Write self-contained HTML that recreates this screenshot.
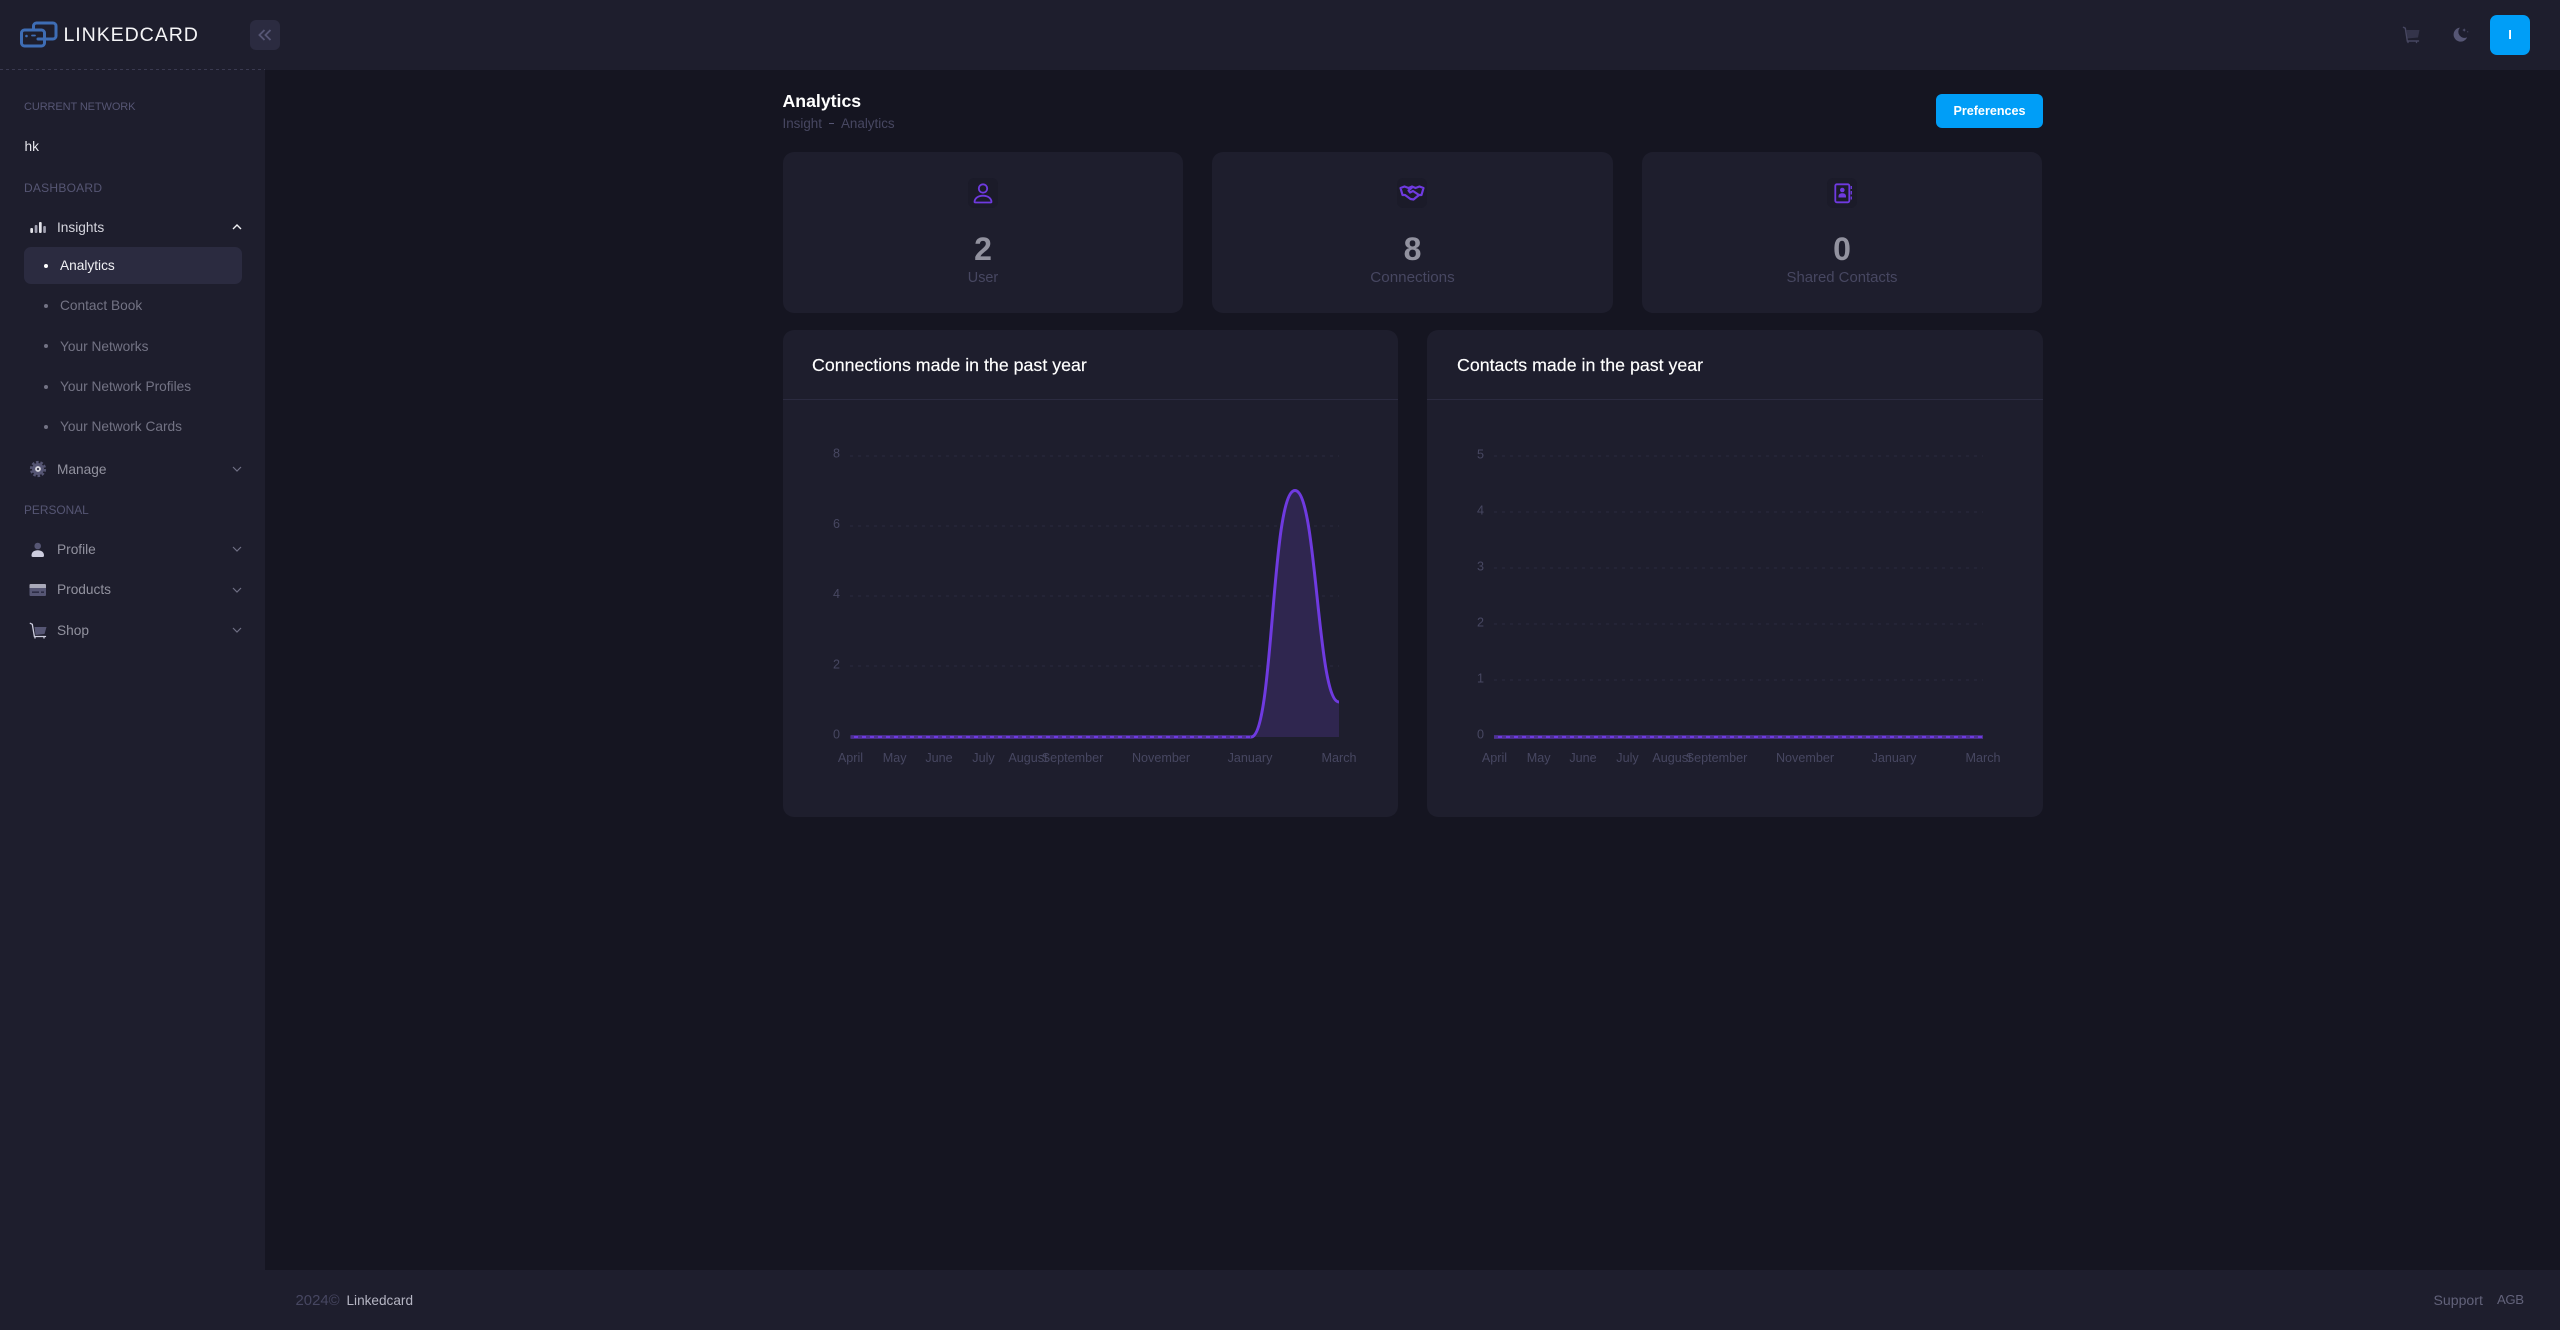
<!DOCTYPE html>
<html lang="en">
<head>
<meta charset="utf-8">
<title>Analytics - Linkedcard</title>
<style>
html,body{margin:0;padding:0;width:2560px;height:1330px;overflow:hidden;background:#151521;font-family:"Liberation Sans",Arial,sans-serif}
*{box-sizing:border-box}
.a,.t{position:absolute}
.t{white-space:nowrap;line-height:20px;height:20px}
svg{position:absolute;overflow:visible}
.panel{position:absolute;background:#1e1e2d;border-radius:11px}
.sec{color:#565674;left:24px}
.nav{left:57px;font-size:13.7px;color:#92929f}
.sub{left:60px;font-size:13.7px;color:#737384}
.dot{position:absolute;left:43.5px;width:4px;height:4px;border-radius:50%;background:#737384}
.box{position:absolute;top:178px;width:30px;height:30px;border-radius:6px;background:#1b1b29}
.num{font-weight:700;font-size:32px;color:#92929f;text-align:center;line-height:36px;height:36px;top:231px}
.lbl{color:#474761;text-align:center;top:268px}
.ct{top:355px;font-size:17.8px;color:#fff;-webkit-text-stroke:.15px #fff}
.hr{position:absolute;top:399px;height:1px;background:#2b2b40}
.ax{font-size:12.6px;fill:#474761;font-family:"Liberation Sans",Arial,sans-serif}
.grid{stroke:#2b2b3e;stroke-width:1;stroke-dasharray:3 5;fill:none}
.base{stroke:#2b2b40;stroke-width:1;stroke-dasharray:4 4;fill:none}
</style>
</head>
<body>
<!-- header + sidebar + footer surfaces -->
<div class="a" style="left:0;top:0;width:2560px;height:70px;background:#1e1e2d"></div>
<div class="a" style="left:0;top:70px;width:265px;height:1260px;background:#1e1e2d"></div>
<div class="a" style="left:265px;top:1270px;width:2295px;height:60px;background:#1e1e2d"></div>
<div class="a" style="left:0;top:69px;width:265px;height:1px;background-image:linear-gradient(90deg,#3a3a50 50%,transparent 50%);background-size:6px 1px"></div>

<!-- logo -->
<svg style="left:0;top:0" width="70" height="70" viewBox="0 0 70 70" fill="none" stroke="#3e6db5" stroke-width="3" stroke-linecap="round" stroke-linejoin="round">
<path d="M33.5 29V26a3 3 0 0 1 3-3H53a3 3 0 0 1 3 3V36a3 3 0 0 1-3 3H38"/>
<rect x="21.5" y="30" width="23" height="16" rx="3"/>
<circle cx="26.5" cy="36" r=".8" fill="#3e6db5" stroke-width="1"/>
<path d="M32 35.5H35" stroke-width="1.800"/>
</svg>
<div class="t" style="left:63.5px;top:24.5px;font-size:19.6px;letter-spacing:.9px;color:#f4f4f6">LINKEDCARD</div>

<!-- collapse -->
<div class="a" style="left:250px;top:20px;width:30px;height:30px;border-radius:6px;background:#2b2b40"></div>
<svg style="left:250px;top:20px" width="30" height="30" viewBox="0 0 30 30" fill="none" stroke="#565674" stroke-width="1.900"><path d="M14.500 10 9.500 15l5 5M20.500 10l-5 5 5 5"/></svg>

<!-- top right -->
<svg style="left:2400px;top:24px" width="24" height="22" viewBox="0 0 24 22" fill="none">
<path d="M6.500 6H19.500L18 13.500 7.500 14.500Z" fill="#34344a"/>
<path d="M3.500 3.300 5.300 4.200 7.300 17H18.500M8 17v1.500M16.500 17v1.500" stroke="#474761" stroke-width="1.400" stroke-linecap="round"/>
</svg>
<svg style="left:2451px;top:26px" width="20" height="18" viewBox="0 0 22 20" fill="#565674">
<path d="M9.800 1.800A7.800 7.800 0 1 0 17.800 12.500 6.800 6.800 0 0 1 9.800 1.800Z"/>
<path d="M14.500 2.500l.6 1.400 1.400.6-1.400.6-.6 1.400-.6-1.400-1.400-.6 1.400-.6Z"/>
<circle cx="18.500" cy="6.500" r=".6"/>
</svg>
<div class="a" style="left:2490px;top:15px;width:40px;height:40px;border-radius:7px;background:#009ef7;color:#fff;font-weight:700;font-size:13px;line-height:40px;text-align:center">I</div>

<!-- sidebar -->
<div class="t sec" style="top:97px;font-size:11px;letter-spacing:-.1px">CURRENT NETWORK</div>
<div class="t" style="left:24.500px;top:137px;font-size:13.7px;color:#e6e6ec">hk</div>
<div class="t sec" style="top:177.500px;font-size:12px;letter-spacing:.25px">DASHBOARD</div>

<svg style="left:28px;top:219px" width="20" height="16" viewBox="0 0 20 16" fill="#e4e4ea">
<rect x="2.300" y="9" width="2.700" height="5" rx="1"/><rect x="6.700" y="6" width="2.700" height="8" rx="1" fill="#a0a0b0"/><rect x="11" y="3" width="2.700" height="11" rx="1"/><rect x="15.200" y="7" width="2.700" height="7" rx="1" fill="#a0a0b0"/>
</svg>
<div class="t nav" style="top:217.500px;color:#d5d5de">Insights</div>
<svg style="left:231px;top:221px" width="12" height="12" viewBox="0 0 12 12" fill="none" stroke="#f0f0f4" stroke-width="1.400"><path d="M2 8 6 4l4 4"/></svg>

<div class="a" style="left:24px;top:247px;width:218px;height:37px;border-radius:7px;background:#2b2b40"></div>
<div class="dot" style="top:263.500px;background:#fff"></div>
<div class="t sub" style="top:255.500px;color:#f0f0f4">Analytics</div>
<div class="dot" style="top:303.500px"></div>
<div class="t sub" style="top:295.500px">Contact Book</div>
<div class="dot" style="top:344px"></div>
<div class="t sub" style="top:336.500px">Your Networks</div>
<div class="dot" style="top:384.500px"></div>
<div class="t sub" style="top:376.500px">Your Network Profiles</div>
<div class="dot" style="top:424.500px"></div>
<div class="t sub" style="top:416.500px">Your Network Cards</div>

<svg style="left:28px;top:459px" width="20" height="20" viewBox="0 0 20 20">
<circle cx="10" cy="10" r="6" fill="#565674"/>
<circle cx="10" cy="10" r="7" fill="none" stroke="#565674" stroke-width="2.200" stroke-dasharray="2.600 1.800"/>
<circle cx="10" cy="10" r="2.900" fill="#d5d5de"/><circle cx="10" cy="10" r="1.100" fill="#3a3a50"/>
</svg>
<div class="t nav" style="top:459.500px">Manage</div>
<svg style="left:231px;top:463px" width="12" height="12" viewBox="0 0 12 12" fill="none" stroke="#6f6f84" stroke-width="1.200"><path d="M2 4l4 4 4-4"/></svg>

<div class="t sec" style="top:499.500px;font-size:11.9px">PERSONAL</div>

<svg style="left:28px;top:540px" width="20" height="20" viewBox="0 0 20 20">
<circle cx="9.700" cy="6" r="3.300" fill="#565674"/>
<path d="M3.500 15.500C3.500 12 6.300 10.300 9.700 10.300S16 12 16 15.500C16 16.600 15.500 17 14.500 17H5C4 17 3.500 16.600 3.500 15.500Z" fill="#cdcdde"/>
</svg>
<div class="t nav" style="top:539.500px">Profile</div>
<svg style="left:231px;top:543px" width="12" height="12" viewBox="0 0 12 12" fill="none" stroke="#6f6f84" stroke-width="1.200"><path d="M2 4l4 4 4-4"/></svg>

<svg style="left:28px;top:580px" width="20" height="20" viewBox="0 0 20 20">
<path d="M1.500 5a1 1 0 0 1 1-1H17a1 1 0 0 1 1 1V8H1.500Z" fill="#a9a9b9"/>
<path d="M1.500 8H18V15a1 1 0 0 1-1 1H2.500a1 1 0 0 1-1-1Z" fill="#565674"/>
<rect x="4" y="11.500" width="7" height="1.300" fill="#23233a"/><rect x="13" y="11.500" width="3" height="1.300" fill="#23233a"/>
</svg>
<div class="t nav" style="top:580px">Products</div>
<svg style="left:231px;top:584px" width="12" height="12" viewBox="0 0 12 12" fill="none" stroke="#6f6f84" stroke-width="1.200"><path d="M2 4l4 4 4-4"/></svg>

<svg style="left:28px;top:621px" width="20" height="20" viewBox="0 0 20 20" fill="none">
<path d="M6.500 6H18.500L16.500 13 7.500 14Z" fill="#565674"/>
<path d="M2.300 2.300 4.300 3.300 6.400 15.500H17.500M7 15.500v1.500M16 15.500v1.500" stroke="#cdcdde" stroke-width="1.300" stroke-linecap="round"/>
</svg>
<div class="t nav" style="top:620.500px">Shop</div>
<svg style="left:231px;top:624px" width="12" height="12" viewBox="0 0 12 12" fill="none" stroke="#6f6f84" stroke-width="1.200"><path d="M2 4l4 4 4-4"/></svg>

<!-- page heading -->
<div class="t" style="left:782.500px;top:91px;font-size:17.7px;font-weight:700;color:#fff">Analytics</div>
<div class="t" style="left:782.500px;top:114px;font-size:13.4px;color:#474761">Insight</div>
<div class="a" style="left:828.500px;top:122.500px;width:5px;height:1.500px;background:#565674"></div>
<div class="t" style="left:841px;top:114px;font-size:13.4px;color:#474761">Analytics</div>
<div class="a" style="left:1936px;top:94px;width:107px;height:34px;border-radius:6px;background:#009ef7;color:#fff;font-weight:700;font-size:12.600px;line-height:34px;text-align:center">Preferences</div>

<!-- stat cards -->
<div class="panel" style="left:783px;top:152px;width:400px;height:161px"></div>
<div class="panel" style="left:1212px;top:152px;width:401px;height:161px"></div>
<div class="panel" style="left:1642px;top:152px;width:400px;height:161px"></div>

<div class="box" style="left:968px"></div>
<svg style="left:968px;top:178px" width="30" height="30" viewBox="0 0 30 30" fill="none" stroke="#6f3ae0" stroke-width="1.800">
<circle cx="15" cy="10.500" r="4.200"/>
<path d="M7.300 24.500H22.700C23.300 24.500 23.600 24.200 23.500 23.600 23 20 19.500 17.700 15 17.700S7 20 6.500 23.600C6.400 24.200 6.700 24.500 7.300 24.500Z"/>
</svg>
<div class="t num" style="left:783px;width:400px">2</div>
<div class="t lbl" style="left:783px;width:400px;font-size:14.4px">User</div>

<div class="box" style="left:1397px"></div>
<svg style="left:1397px;top:178px" width="30" height="30" viewBox="0 0 30 30" fill="none" stroke="#6f3ae0" stroke-width="2.200" stroke-linejoin="round" stroke-linecap="round">
<path d="M3.500 10 7.500 8.500 11.500 10 15 8.500 18.500 10 22.500 8.500 26.500 10 24.500 17 22 17 16.500 21.500 13.500 21 8 17 5.500 17Z"/>
<path d="M15 9.500 11.500 12.500 13 14.500 16 13 22 17"/>
</svg>
<div class="t num" style="left:1212px;width:401px">8</div>
<div class="t lbl" style="left:1212px;width:401px;font-size:15.2px">Connections</div>

<div class="box" style="left:1827px"></div>
<svg style="left:1827px;top:178px" width="30" height="30" viewBox="0 0 30 30" fill="none">
<rect x="8.300" y="6.300" width="14" height="18" rx="1.500" stroke="#6f3ae0" stroke-width="1.800"/>
<circle cx="15.300" cy="12" r="2.300" fill="#6f3ae0"/>
<path d="M11.500 18.500C11.500 16.300 13 15.300 15.300 15.300S19 16.300 19 18.500V19.500H11.500Z" fill="#6f3ae0"/>
<path d="M24.300 8V11M24.300 13V16.500M24.300 18.500V21.500" stroke="#6f3ae0" stroke-width="1.300"/>
</svg>
<div class="t num" style="left:1642px;width:400px">0</div>
<div class="t lbl" style="left:1642px;width:400px;font-size:14.9px">Shared Contacts</div>

<!-- chart A -->
<div class="panel" style="left:783px;top:330px;width:615px;height:487px"></div>
<div class="t ct" style="left:812px">Connections made in the past year</div>
<div class="hr" style="left:783px;width:615px"></div>
<svg style="left:783px;top:400px" width="615" height="417" viewBox="783 400 615 417">
<path class="grid" d="M850 456H1339M850 526H1339M850 596H1339M850 666H1339"/>
<path d="M1251 737C1274 737 1271 490.500 1295 490.500 1317 490.500 1317 702 1339 702V737Z" fill="#2f264f"/>
<path d="M850.500 737H1251C1274 737 1271 490.500 1295 490.500 1317 490.500 1317 702 1339 702" fill="none" stroke="#6f3ae0" stroke-width="3"/>
<path class="base" d="M850 737H1251"/>
<g class="ax" text-anchor="end">
<text x="840" y="457.500">8</text><text x="840" y="528">6</text><text x="840" y="598">4</text><text x="840" y="668.500">2</text><text x="840" y="738.500">0</text>
</g>
<g class="ax" text-anchor="middle">
<text x="850.500" y="762">April</text><text x="894.700" y="762">May</text><text x="939" y="762">June</text><text x="983.500" y="762">July</text><text x="1028" y="762">August</text><text x="1072.500" y="762">September</text><text x="1161" y="762">November</text><text x="1250" y="762">January</text><text x="1339" y="762">March</text>
</g>
</svg>

<!-- chart B -->
<div class="panel" style="left:1427px;top:330px;width:616px;height:487px"></div>
<div class="t ct" style="left:1457px">Contacts made in the past year</div>
<div class="hr" style="left:1427px;width:616px"></div>
<svg style="left:1427px;top:400px" width="616" height="417" viewBox="1427 400 616 417">
<path class="grid" d="M1494 456H1983M1494 512H1983M1494 568H1983M1494 624H1983M1494 680H1983"/>
<path d="M1494 737H1983" fill="none" stroke="#6f3ae0" stroke-width="3"/>
<path class="base" d="M1494 737H1983"/>
<g class="ax" text-anchor="end">
<text x="1484" y="458.500">5</text><text x="1484" y="514.500">4</text><text x="1484" y="570.500">3</text><text x="1484" y="626.500">2</text><text x="1484" y="682.500">1</text><text x="1484" y="738.500">0</text>
</g>
<g class="ax" text-anchor="middle">
<text x="1494.500" y="762">April</text><text x="1538.700" y="762">May</text><text x="1583" y="762">June</text><text x="1627.500" y="762">July</text><text x="1672" y="762">August</text><text x="1716.500" y="762">September</text><text x="1805" y="762">November</text><text x="1894" y="762">January</text><text x="1983" y="762">March</text>
</g>
</svg>

<!-- footer -->
<div class="t" style="left:295.500px;top:1290.500px;font-size:14.9px;color:#474761">2024©</div>
<div class="t" style="left:346.500px;top:1290.500px;font-size:13.6px;color:#b5b5c3">Linkedcard</div>
<div class="t" style="left:2433.500px;top:1290px;font-size:14.100px;color:#62627a">Support</div>
<div class="t" style="left:2497px;top:1290px;font-size:13.200px;letter-spacing:-.4px;color:#62627a">AGB</div>
</body>
</html>
